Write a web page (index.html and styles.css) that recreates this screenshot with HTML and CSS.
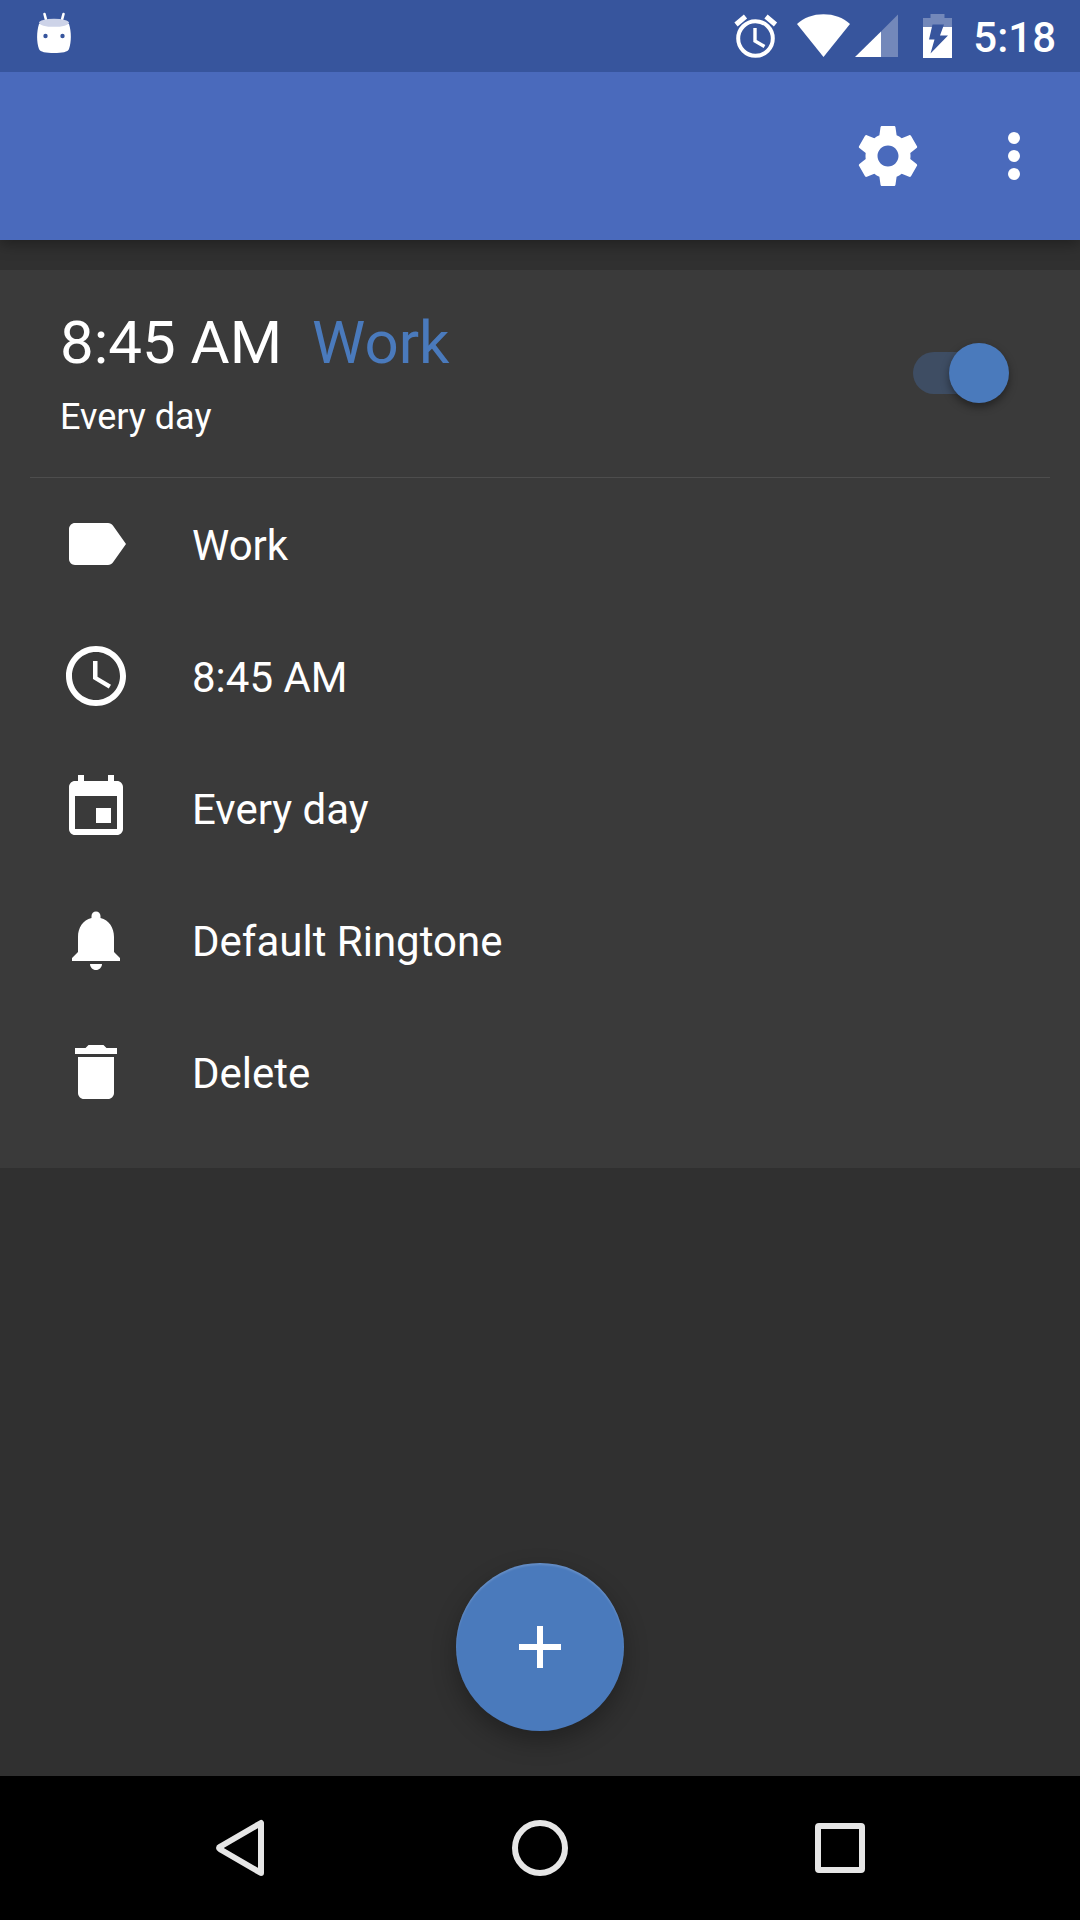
FILE: index.html
```html
<!DOCTYPE html>
<html lang="en">
<head>
<meta charset="utf-8">
<meta name="viewport" content="width=device-width, initial-scale=1">
<title>Alarms</title>
<link rel="stylesheet" href="styles.css">
</head>
<body>
<div class="status-bar">
  <svg class="status-robot" viewBox="0 0 36 48" width="36" height="48" aria-hidden="true">
    <path d="M8.500 2l2 7.500M27.500 2l-2 7.500" stroke="#fff" stroke-width="2.600" stroke-linecap="round"/>
    <path d="M3 12C.500 20 .500 30 3 37c1 3 7 4 15 4s14-1 15-4c2.500-7 2.500-17 0-25z" fill="#fff"/>
    <ellipse cx="18" cy="10.800" rx="15" ry="4" fill="#cdd3e8"/>
    <circle cx="9.500" cy="24" r="2.200" fill="#37559d"/>
    <circle cx="26.500" cy="24" r="2.200" fill="#37559d"/>
  </svg>
  <div class="status-icons">
    <svg viewBox="0 0 44 44" width="44" height="44" fill="none" stroke="#fff" aria-hidden="true">
      <circle cx="21.500" cy="24.500" r="17.300" stroke-width="4"/>
      <path d="M21 14v13l9.500 5.500" stroke-width="3.400"/>
      <path d="M2 10.500l9.500-8M32 2.500l9.500 8" stroke-width="5"/>
    </svg>
    <div class="signal">
      <svg viewBox="0 0 54 44" width="54" height="44" fill="#fff" aria-hidden="true">
        <path d="M27.500 43L1 10C8 3.500 17 .200 27.500 .200S47 3.500 54 10z"/>
      </svg>
      <svg viewBox="0 0 43 44" width="43" height="44" fill="#fff" aria-hidden="true">
        <path d="M43 .500V43H26V17.500z" opacity=".300"/>
        <path d="M0 43L26 17.500V43z"/>
      </svg>
    </div>
    <svg class="battery" viewBox="0 0 29 44" width="29" height="44" aria-hidden="true">
      <path d="M0 13V4h7.500V0h14v4H29v9z" fill="#fff" opacity=".300"/>
      <path d="M0 13h29v31H0z" fill="#fff"/>
      <path d="M9.500 10.500H21L17 21.500h8L7.500 39.500l4-14H6z" fill="#37559d"/>
    </svg>
    <time class="clock">5:18</time>
  </div>
</div>

<header class="app-bar">
  <button class="icon-button" type="button" aria-label="Settings">
    <svg class="icon" viewBox="0 0 24 24" aria-hidden="true"><path d="M19.430 12.980c.040-.320.070-.640.070-.980s-.030-.660-.070-.980l2.110-1.650c.190-.150.240-.420.120-.640l-2-3.460c-.120-.220-.390-.300-.610-.220l-2.490 1c-.520-.400-1.080-.730-1.690-.980l-.380-2.650C14.460 2.180 14.250 2 14 2h-4c-.250 0-.460.180-.490.420l-.380 2.650c-.610.250-1.170.590-1.690.980l-2.490-1c-.230-.090-.490 0-.610.220l-2 3.460c-.130.220-.070.490.120.640l2.110 1.650c-.040.320-.070.650-.070.980s.030.660.070.980l-2.110 1.650c-.190.150-.240.420-.120.640l2 3.460c.120.220.390.300.610.220l2.490-1c.520.400 1.080.730 1.690.980l.380 2.650c.030.240.240.420.490.420h4c.250 0 .460-.180.490-.420l.380-2.650c.610-.250 1.170-.590 1.690-.980l2.490 1c.230.090.490 0 .610-.220l2-3.460c.120-.220.070-.490-.120-.640l-2.110-1.650zM12 15.500c-1.930 0-3.500-1.570-3.500-3.500s1.570-3.500 3.500-3.500 3.500 1.570 3.500 3.500-1.570 3.500-3.500 3.500z"/></svg>
  </button>
  <button class="icon-button" type="button" aria-label="More options">
    <svg class="icon" viewBox="0 0 24 24" aria-hidden="true"><circle cx="12" cy="6" r="2"/><circle cx="12" cy="12" r="2"/><circle cx="12" cy="18" r="2"/></svg>
  </button>
</header>

<main class="content">
  <section class="alarm">
    <div class="alarm-header">
      <div class="alarm-summary">
        <h1 class="alarm-title"><span>8:45 AM</span><label class="alarm-name" for="alarm-on">Work</label></h1>
        <p class="alarm-days">Every day</p>
      </div>
      <input class="switch" type="checkbox" role="switch" id="alarm-on" checked>
    </div>
    <ul class="options">
      <li><button class="option" type="button">
        <svg class="icon" viewBox="0 0 24 24" aria-hidden="true"><path d="M17.630 5.840C17.270 5.330 16.670 5 16 5L5 5.010C3.900 5.010 3 5.900 3 7v10c0 1.100.900 1.990 2 1.990L16 19c.670 0 1.270-.330 1.630-.840L22 12l-4.370-6.160z"/></svg>
        <span class="option-text">Work</span></button></li>
      <li><button class="option" type="button">
        <svg class="icon" viewBox="0 0 24 24" aria-hidden="true"><path d="M11.990 2C6.470 2 2 6.480 2 12s4.470 10 9.990 10C17.520 22 22 17.520 22 12S17.520 2 11.990 2zM12 20c-4.420 0-8-3.580-8-8s3.580-8 8-8 8 3.580 8 8-3.580 8-8 8z"/><path d="M12.500 7H11v6l5.250 3.150.750-1.230-4.500-2.670z"/></svg>
        <span class="option-text">8:45 AM</span></button></li>
      <li><button class="option" type="button">
        <svg class="icon" viewBox="0 0 24 24" aria-hidden="true"><path d="M17 12h-5v5h5v-5zM16 1v2H8V1H6v2H5c-1.110 0-1.990.900-1.990 2L3 19c0 1.100.890 2 2 2h14c1.100 0 2-.900 2-2V5c0-1.100-.900-2-2-2h-1V1h-2zm3 18H5V8h14v11z"/></svg>
        <span class="option-text">Every day</span></button></li>
      <li><button class="option" type="button">
        <svg class="icon" viewBox="0 0 24 24" aria-hidden="true"><path d="M12 22c1.100 0 2-.900 2-2h-4c0 1.100.890 2 2 2zm6-6v-5c0-3.070-1.640-5.640-4.500-6.320V4c0-.830-.670-1.500-1.500-1.500s-1.500.670-1.500 1.500v.680C7.630 5.360 6 7.920 6 11v5l-2 2v1h16v-1l-2-2z"/></svg>
        <span class="option-text">Default Ringtone</span></button></li>
      <li><button class="option" type="button">
        <svg class="icon" viewBox="0 0 24 24" aria-hidden="true"><path d="M6 19c0 1.100.900 2 2 2h8c1.100 0 2-.900 2-2V7H6v12zM19 4h-3.500l-1-1h-5l-1 1H5v2h14V4z"/></svg>
        <span class="option-text">Delete</span></button></li>
    </ul>
  </section>
  <button class="fab" type="button" aria-label="Add alarm">
    <svg class="icon" viewBox="0 0 24 24" aria-hidden="true"><path d="M19 13h-6v6h-2v-6H5v-2h6V5h2v6h6z"/></svg>
  </button>
</main>

<nav class="nav-bar" aria-label="System">
  <button class="nav-button" type="button" aria-label="Back">
    <svg viewBox="0 0 60 60" width="60" height="60" aria-hidden="true"><path d="M51 5v50L10.500 31.500q-3-1.500 0-3z"/></svg>
  </button>
  <button class="nav-button" type="button" aria-label="Home">
    <svg viewBox="0 0 60 60" width="60" height="60" aria-hidden="true"><circle cx="30" cy="30" r="25"/></svg>
  </button>
  <button class="nav-button" type="button" aria-label="Recent apps">
    <svg viewBox="0 0 60 60" width="60" height="60" aria-hidden="true"><rect x="8" y="8" width="44" height="44" rx="1"/></svg>
  </button>
</nav>
</body>
</html>
```

FILE: styles.css
```css
* {
  box-sizing: border-box;
}

body {
  display: flex;
  flex-direction: column;
  min-height: 100vh;
  margin: 0;
  background: #303030;
  color: #fff;
  font-family: Roboto, "Noto Sans", sans-serif;
}

button {
  padding: 0;
  border: 0;
  background: none;
  color: inherit;
  font: inherit;
  cursor: pointer;
}

svg {
  display: block;
  flex: none;
}

.icon {
  width: 72px;
  height: 72px;
  fill: #fff;
}

/* System status bar, stacked above the app bar's shadow */
.status-bar {
  display: flex;
  align-items: center;
  justify-content: space-between;
  height: 72px;
  padding: 0 24px 0 36px;
  background: #37559d;
  z-index: 1;
}

.status-robot {
  fill: none;
}

.status-icons {
  display: flex;
  align-items: center;
  gap: 18px;
}

.signal {
  display: flex;
  gap: 5px;
}

.battery {
  margin: 0 3px 0 7px;
}

.clock {
  padding-top: 3px;
  font-size: 42px;
  font-weight: 500;
  line-height: 48px;
}

/* App bar */
.app-bar {
  display: flex;
  align-items: center;
  justify-content: flex-end;
  gap: 54px;
  height: 168px;
  padding: 0 30px;
  background: #4a6abc;
  box-shadow: 0 4px 14px rgba(0, 0, 0, 0.35);
}

/* Alarm list */
.content {
  display: flex;
  flex: 1;
  flex-direction: column;
  align-items: center;
  justify-content: space-between;
  gap: 45px;
  padding: 30px 0 45px;
}

.alarm {
  width: 100%;
  padding: 0 30px 30px;
  background: #3a3a3a;
}

.alarm-header {
  display: flex;
  align-items: center;
  justify-content: space-between;
  padding: 38px 41px 39px 30px;
  border-bottom: 1px solid #4d4d4d;
}

.alarm-title {
  display: flex;
  gap: 30px;
  margin: 0 0 18px;
  font-size: 60px;
  font-weight: 400;
  line-height: 70px;
}

.alarm-name {
  color: #4a7abc;
}

.alarm-days {
  margin: 0;
  font-size: 36px;
  line-height: 42px;
}

.switch {
  display: flex;
  align-items: center;
  flex: none;
  width: 96px;
  height: 60px;
  margin: 0;
  appearance: none;
  cursor: pointer;
}

.switch::before {
  content: "";
  width: 90px;
  height: 42px;
  border-radius: 21px;
  background: #3e4d63;
}

.switch::after {
  content: "";
  flex: none;
  width: 60px;
  height: 60px;
  margin-left: -54px;
  border-radius: 50%;
  background: #4a7abc;
  box-shadow: 0 4px 8px rgba(0, 0, 0, 0.4);
}

.switch:not(:checked)::after {
  margin-left: -90px;
  background: #b9b9b9;
}

.options {
  margin: 0;
  padding: 0;
  list-style: none;
}

.option {
  display: flex;
  align-items: center;
  gap: 60px;
  width: 100%;
  height: 132px;
  padding: 0 30px;
  text-align: left;
}

.option-text {
  padding-top: 3px;
  font-size: 42px;
  line-height: 48px;
}

.fab {
  display: grid;
  place-items: center;
  width: 168px;
  height: 168px;
  border-radius: 50%;
  background: #4a7abc;
  box-shadow:
    inset 0 2px 2px rgba(255, 255, 255, 0.15),
    0 10px 24px rgba(0, 0, 0, 0.3);
}

/* System navigation */
.nav-bar {
  display: flex;
  height: 144px;
  padding: 0 90px;
  background: #000;
}

.nav-button {
  display: grid;
  flex: 1;
  place-items: center;
}

.nav-button svg {
  fill: none;
  stroke: #e6e6e6;
  stroke-width: 6;
  stroke-linejoin: round;
}
```
